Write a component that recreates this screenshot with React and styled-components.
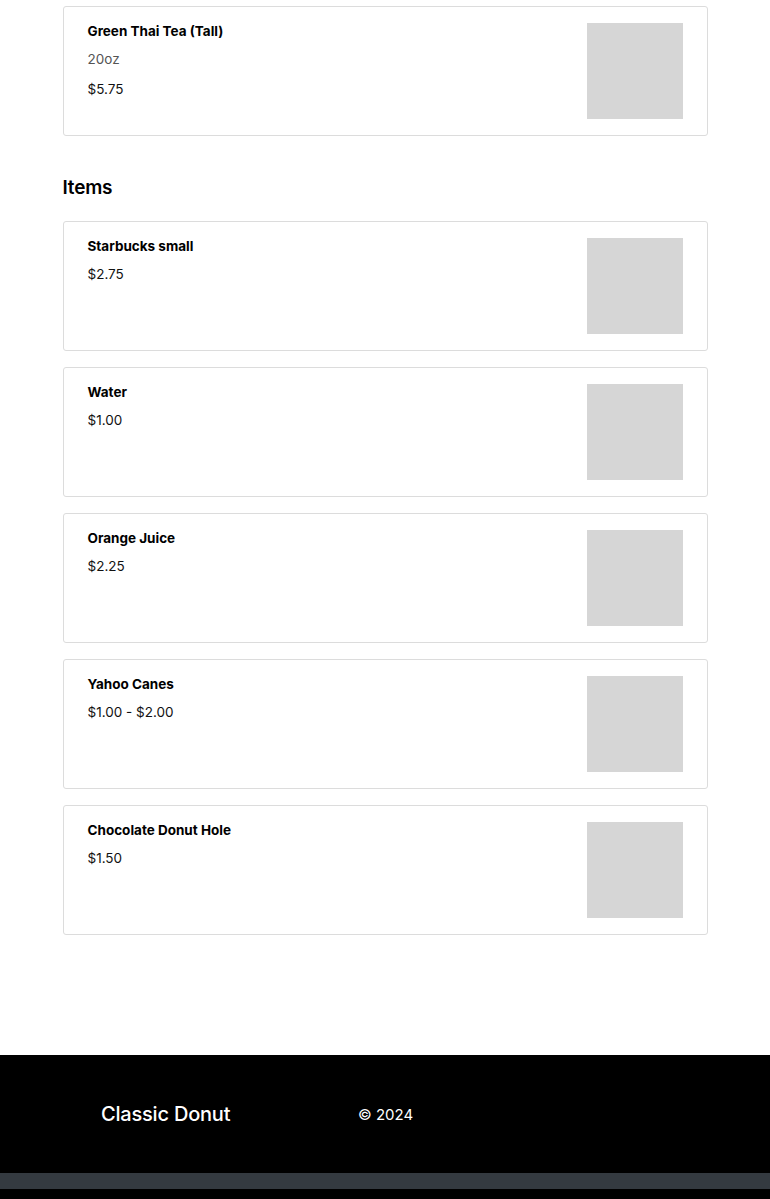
import React from "react";
import styled, { createGlobalStyle } from "styled-components";

const featured = [{ name: "Green Thai Tea (Tall)", description: "20oz", price: "$5.75" }];

const items = [
  { name: "Starbucks small", price: "$2.75" },
  { name: "Water", price: "$1.00" },
  { name: "Orange Juice", price: "$2.25" },
  { name: "Yahoo Canes", price: "$1.00 - $2.00" },
  { name: "Chocolate Donut Hole", price: "$1.50" },
];

const MenuCard = ({ item }) => (
  <Card>
    <Info>
      <Name>{item.name}</Name>
      {item.description && <Description>{item.description}</Description>}
      <Price>{item.price}</Price>
    </Info>
    <Thumb />
  </Card>
);

const App = () => {
  return (
    <>
      <GlobalStyle />
      <Main>
        <List>
          {featured.map((item) => (
            <MenuCard key={item.name} item={item} />
          ))}
        </List>
        <Heading>Items</Heading>
        <List>
          {items.map((item) => (
            <MenuCard key={item.name} item={item} />
          ))}
        </List>
      </Main>
      <Footer>
        <FooterInner>
          <Brand>Classic Donut</Brand>
          <Copyright>© 2024</Copyright>
        </FooterInner>
        <FooterBar />
        <FooterBottom />
      </Footer>
    </>
  );
};

const GlobalStyle = createGlobalStyle`
  body {
    margin: 0;
    background: #fff;
    font-family: Inter, "Liberation Sans", sans-serif;
    color: #000;
  }
`;

const Main = styled.main`
  width: 645px;
  margin: 0 auto;
  padding: 6px 0 120px;
`;

const List = styled.div`
  display: flex;
  flex-direction: column;
  gap: 16px;
`;

const Heading = styled.h2`
  margin: 40px 0 21px;
  font-size: 19px;
  line-height: 24px;
  font-weight: 600;
  letter-spacing: -0.2px;
`;

const Card = styled.div`
  display: flex;
  justify-content: space-between;
  align-items: flex-start;
  border: 1px solid #dcdcdc;
  border-radius: 3px;
  padding: 16px 24px;
`;

const Info = styled.div`
  display: flex;
  flex-direction: column;
`;

const Name = styled.div`
  font-size: 13.5px;
  line-height: 16px;
  font-weight: 700;
`;

const Description = styled.div`
  margin-top: 12px;
  font-size: 13.5px;
  line-height: 16px;
  color: #545454;
`;

const Price = styled.div`
  margin-top: 12px;
  font-size: 13.5px;
  line-height: 16px;
  color: #111;

  ${Description} + & {
    margin-top: 14px;
  }
`;

const Thumb = styled.div`
  width: 96px;
  height: 96px;
  background: #d6d6d6;
  flex-shrink: 0;
`;

const Footer = styled.footer`
  background: #000;
  color: #fff;
`;

const FooterInner = styled.div`
  display: grid;
  grid-template-columns: 257px auto;
  align-items: center;
  height: 118px;
  padding-left: 101px;
`;

const Brand = styled.div`
  font-size: 20px;
  font-weight: 500;
  letter-spacing: -0.2px;
`;

const Copyright = styled.div`
  font-size: 15px;
`;

const FooterBar = styled.div`
  height: 16px;
  background: #343a40;
`;

const FooterBottom = styled.div`
  height: 10px;
  background: #000;
`;

export default App;
